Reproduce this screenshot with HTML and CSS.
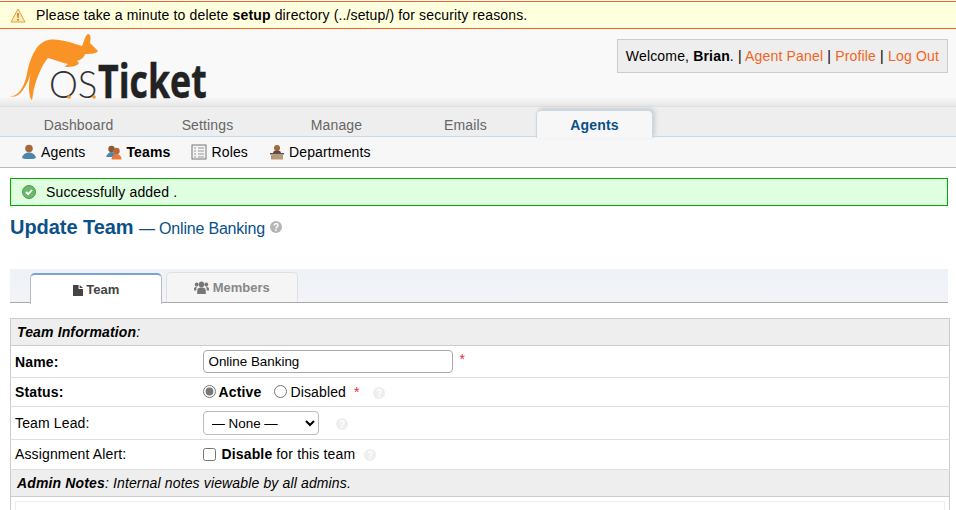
FILE: index.html
```html
<!DOCTYPE HTML>
<html>
<head>
    <title>osTicket :: Update Team</title>
    <meta charset="utf-8">
    <link rel="stylesheet" href="styles.css">
</head>
<body>
<div id="page">
    <div id="notice">
        <svg class="warn" width="16" height="15" viewBox="0 0 16 15"><path d="M8 1L15 14H1Z" fill="#fdeeb0" stroke="#dba24a"/><path d="M7.3 5h1.4l-.2 5h-1zM7.3 11h1.4v1.4H7.3z" fill="#a8601c"/></svg>
        <span>Please take a minute to delete <b>setup</b> directory (../setup/) for security reasons.</span>
    </div>

    <div id="header">
        <svg id="logo" width="250" height="84" viewBox="0 0 250 84">
            <path d="M1 62C9 63 15 54 18 40C21 24 27 9 39 6C50 4 63 9 73 12C75 8 76 1 79 0C82 0 82 5 81 9L89 17C87 20 80 20 76 20C75 24 71 26 68 27L70 29C68 32 64 33 56 33C57 31 58 31 59 30C54 29 47 26 39 24C33 31 29 41 26 51C24 57 24 62 23 66C21 65 20 60 20 53C20 47 21 43 22 39C19 48 12 66 1 62Z" fill="#f99325"/>
            <text transform="translate(40 64) scale(.96 1)" class="logo-os">OS</text>
            <text transform="translate(89 64) scale(.76 1)" class="logo-ticket">Ticket</text>
            <circle cx="60" cy="63" r="1.8" fill="#f99325"/>
            <circle cx="85" cy="63" r="1.8" fill="#f99325"/>
        </svg>
        <div id="info">
            Welcome, <b>Brian</b>. | <a href="#">Agent Panel</a> | <a href="#">Profile</a> | <a href="#">Log Out</a>
        </div>
    </div>

    <div id="nav">
        <a href="#">Dashboard</a>
        <a href="#">Settings</a>
        <a href="#">Manage</a>
        <a href="#">Emails</a>
        <a href="#" class="active">Agents</a>
    </div>

    <div id="subnav">
        <a href="#">
            <svg width="16" height="16" viewBox="0 0 16 16"><circle cx="8" cy="4.500" r="3.800" fill="#a5683a"/><path d="M1 14C2 10 5 8.500 8 8.500s6 1.500 7 5.500l-3 1H4Z" fill="#4d86ad"/></svg>
            Agents</a>
        <a href="#" class="current">
            <svg width="16" height="16" viewBox="0 0 16 16"><circle cx="5.500" cy="5" r="3.200" fill="#8a5a34"/><path d="M0 13C1 10 3 8 5.500 8s4 2 5 5H1Z" fill="#4d86ad"/><circle cx="10.500" cy="7" r="3.200" fill="#b5683a"/><path d="M5.500 15.500C5.500 12 8 10 10.500 10s5 2 5 5.500Z" fill="#e9793a"/></svg>
            Teams</a>
        <a href="#">
            <svg width="16" height="16" viewBox="0 0 16 16"><rect x="1" y="1" width="14" height="14" fill="#f4f4f4" stroke="#777"/><path d="M3 4h2M3 7h2M3 10h2M3 13h2M7 4h6M7 7h6M7 10h6M7 13h6" stroke="#999"/></svg>
            Roles</a>
        <a href="#">
            <svg width="16" height="16" viewBox="0 0 16 16"><circle cx="8" cy="4" r="3" fill="#a5683a"/><path d="M4 9C4 7 6 6.500 8 6.500s4 .5 4 2.500Z" fill="#6b4a30"/><rect x="1" y="9" width="14" height="1.500" fill="#555"/><rect x="2" y="10.500" width="12" height="5" fill="#b89a78"/></svg>
            Departments</a>
    </div>

    <div id="content">
        <div id="msg-notice">
            <svg width="14" height="14" viewBox="0 0 14 14"><circle cx="7" cy="7" r="6.500" fill="#6cb86a" stroke="#4f9a4f"/><path d="M4 7l2.200 2.200L10 5" fill="none" stroke="#fff" stroke-width="1.800"/></svg>
            <span>Successfully added .</span>
        </div>

        <h2 class="title">Update Team <small>— Online Banking</small>
            <svg class="help" width="12" height="12" viewBox="0 0 12 12"><circle cx="6" cy="6" r="6" fill="#b5b5b5"/><text x="6" y="9.500" class="help-mark">?</text></svg>
        </h2>

        <ul class="tabs">
            <li class="active">
                <svg width="10" height="11" viewBox="0 0 9 11" preserveAspectRatio="none"><path d="M0 0h5v4h4v7H0ZM6 0l3 3H6Z" fill="#444"/></svg>
                Team</li>
            <li>
                <svg width="15" height="13" viewBox="0 0 14 11" preserveAspectRatio="none"><circle cx="7" cy="3" r="2.500" fill="#777"/><circle cx="2.500" cy="3" r="1.800" fill="#777"/><circle cx="11.500" cy="3" r="1.800" fill="#777"/><path d="M3 11V8c0-2 2-2.500 4-2.500s4 .5 4 2.500v3ZM0 8V6.500C0 5.500 1 5 2.500 5L2 8ZM14 8V6.500C14 5.500 13 5 11.500 5L12 8Z" fill="#777"/></svg>
                Members</li>
        </ul>

        <table class="form_table">
            <tr class="th"><th colspan="2"><em><b>Team Information</b>:</em></th></tr>
            <tr class="name-row">
                <td class="lbl"><b>Name:</b></td>
                <td><input type="text" value="Online Banking"> <span class="error">*</span></td>
            </tr>
            <tr class="status-row">
                <td class="lbl"><b>Status:</b></td>
                <td>
                    <label class="radio"><input type="radio" name="status" checked><b>Active</b></label>
                    <label class="radio"><input type="radio" name="status">Disabled</label>
                    <span class="error">*</span>
                    <svg class="tip" width="12" height="12" viewBox="0 0 12 12"><circle cx="6" cy="6" r="6" fill="#eee"/><text x="6" y="9.500" class="help-mark">?</text></svg>
                </td>
            </tr>
            <tr class="lead-row">
                <td class="lbl">Team Lead:</td>
                <td>
                    <select><option>— None —</option></select>
                    <svg class="tip" width="12" height="12" viewBox="0 0 12 12"><circle cx="6" cy="6" r="6" fill="#eee"/><text x="6" y="9.500" class="help-mark">?</text></svg>
                </td>
            </tr>
            <tr class="alert-row">
                <td class="lbl">Assignment Alert:</td>
                <td>
                    <input type="checkbox"> <b>Disable</b> for this team
                    <svg class="tip" width="12" height="12" viewBox="0 0 12 12"><circle cx="6" cy="6" r="6" fill="#eee"/><text x="6" y="9.500" class="help-mark">?</text></svg>
                </td>
            </tr>
            <tr class="th"><th colspan="2"><em><b>Admin Notes</b>: Internal notes viewable by all admins.</em></th></tr>
            <tr class="notes-row"><td colspan="2"><div class="editor"></div></td></tr>
        </table>
    </div>
</div>
</body>
</html>
```

FILE: styles.css
```css
* {box-sizing: border-box;}

html, body {
  margin: 0;
  height: 510px;
  overflow: hidden;
}

body {
  font-family: "Liberation Sans", Arial, Helvetica, sans-serif;
  font-size: 14px;
  letter-spacing: .14px;
  color: #000;
  background: #fff;
}

#page {
  height: 510px;
  overflow: hidden;
  padding-top: 1px;
}

#notice {
  display: flex;
  align-items: center;
  gap: 10px;
  height: 28px;
  padding-left: 10px;
  background: #ffffdd;
  border-top: 1px solid #f26522;
  border-bottom: 1px solid #f26522;
}

#header {
  display: flex;
  justify-content: space-between;
  align-items: flex-start;
  height: 77px;
  padding: 10px 8px 0 9px;
  background: linear-gradient(#f9f9f9 88%, #e6e6e6);
}

#logo {
  margin-top: -5px;
}

.logo-os {
  font-family: Lato, "Liberation Sans", sans-serif;
  font-weight: 300;
  font-size: 38px;
  letter-spacing: 0;
  fill: #333;
}

.logo-ticket {
  font-family: "Open Sans", "Liberation Sans", sans-serif;
  font-weight: 700;
  font-size: 47px;
  letter-spacing: 0;
  fill: #222;
  stroke: #222;
  stroke-width: .5px;
}

#info {
  height: 34px;
  padding: 0 8px;
  line-height: 32px;
  letter-spacing: .17px;
  background: #eee;
  border: 1px solid #ccc;
}

#info a {
  color: #f26522;
  text-decoration: none;
}

#nav {
  display: flex;
  gap: 12px;
  height: 31px;
  padding: 3px 0 0 20px;
  background: #eee;
  border-top: 1px solid #e0e0e0;
  border-bottom: 1px solid #c5d9e8;
}

#nav a {
  width: 117px;
  height: 27px;
  line-height: 30px;
  text-align: center;
  color: #666;
  text-decoration: none;
}

#nav a.active {
  height: 28px;
  line-height: 28px;
  font-weight: bold;
  color: #0a4f86;
  background: #f7f7f7;
  border: 1px solid #c5d9e8;
  border-bottom: 0;
  border-radius: 5px 5px 0 0;
  box-shadow: 2px -2px 4px #ccc;
}

#subnav {
  display: flex;
  align-items: center;
  gap: 21px;
  height: 31px;
  padding-left: 21px;
  background: #f7f7f7;
  border-bottom: 1px solid #bbb;
}

#subnav a {
  display: flex;
  align-items: center;
  gap: 4px;
  color: #000;
  text-decoration: none;
}

#subnav a.current {
  font-weight: bold;
}

#content {
  padding: 10px 8px 0 10px;
}

#msg-notice {
  display: flex;
  align-items: center;
  gap: 10px;
  height: 28px;
  padding-left: 11px;
  background: #e0ffe0;
  border: 1px solid #0a0;
}

.title {
  margin: 8px 0 0;
  height: 55px;
  font-size: 20px;
  line-height: 26px;
  letter-spacing: -.05px;
  color: #0a5189;
}

.title small {
  font-size: 16px;
  font-weight: normal;
  letter-spacing: -.2px;
}

.help {
  vertical-align: 1px;
}

.help-mark {
  font-family: "Liberation Sans", sans-serif;
  font-size: 10px;
  font-weight: bold;
  letter-spacing: 0;
  fill: #fff;
  text-anchor: middle;
}

.tabs {
  display: flex;
  gap: 4px;
  height: 34px;
  margin: 0;
  padding: 3px 0 0 20px;
  list-style: none;
  background: linear-gradient(#eef1f6, #f2f4f8);
  border-bottom: 1px solid #aaa;
}

.tabs li {
  width: 132px;
  height: 30px;
  text-align: center;
  line-height: 29px;
  font-size: 13px;
  font-weight: bold;
  letter-spacing: 0;
  color: #888;
  background: #f5f5f5;
  border: 1px solid #e0e0e0;
  border-bottom: 0;
  border-radius: 5px 5px 0 0;
}

.tabs li svg {
  vertical-align: -2px;
}

.tabs li.active {
  height: 31px;
  margin-top: 1px;
  line-height: 29px;
  color: #444;
  background: #fff;
  border: 1px solid #bbb;
  border-top: 2px solid #7ba3d6;
  border-bottom: 0;
}

.form_table {
  width: 940px;
  margin: 15px 0 0;
  border-collapse: collapse;
  border: 1px solid #ccc;
}

.form_table td {
  padding: 0 4px;
  border-bottom: 1px solid #ddd;
}

.form_table td.lbl {
  width: 188px;
}

.form_table th {
  height: 27px;
  padding: 0 6px;
  text-align: left;
  font-weight: normal;
  background: #eee;
  border: 1px solid #ccc;
}

.name-row td { height: 32px; }
.status-row td { height: 29px; }
.lead-row td { height: 33px; }
.alert-row td { height: 30px; padding-bottom: 2px; }

.notes-row td {
  padding: 4px;
  border-bottom: 0;
}

input[type="text"] {
  width: 250px;
  height: 23px;
  margin: 0 1px 0 0;
  padding: 0 5px;
  font: 13.4px "Liberation Sans", Arial, sans-serif;
  border: 1px solid #aaa;
  border-radius: 4px;
}

select {
  width: 116px;
  height: 24px;
  padding: 0 4px;
  font: 13.4px "Liberation Sans", Arial, sans-serif;
  background: #fff;
  border: 1px solid #bbb;
  border-radius: 4px;
}

input[type="checkbox"] {
  width: 13px;
  height: 13px;
  margin: 0 2px 0 0;
  vertical-align: -2px;
}

input[type="radio"] {
  margin: 0 3px 0 0;
  accent-color: #777;
  vertical-align: -1px;
}

.radio {
  margin-right: 9px;
}

.radio + .error {
  margin-left: -5px;
}

.error {
  margin-left: 2px;
  color: #e03030;
}

.name-row .error {
  vertical-align: 2px;
}

.tip {
  margin-left: 9px;
  vertical-align: -2px;
}

.lead-row .tip {
  margin-left: 13px;
}

.alert-row .tip {
  margin-left: 5px;
}

.editor {
  height: 60px;
  border: 1px solid #eee;
}
```
